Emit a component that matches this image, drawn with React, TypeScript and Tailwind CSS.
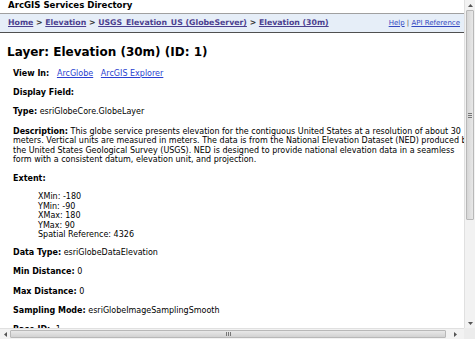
import React from "react";

const Field = ({ label, children, className = "" }: { label: string; children?: React.ReactNode; className?: string }) => (
  <div className={`whitespace-nowrap leading-[9.6px] ${className}`}>
    <b>{label}</b> {children}
  </div>
);

const extent = ["XMin: -180", "YMin: -90", "XMax: 180", "YMax: 90", "Spatial Reference: 4326"];

const App = () => {
  return (
    <div className="relative w-[475px] h-[339px] overflow-hidden bg-white text-[8px] text-[#222] font-['DejaVu_Sans',Verdana,sans-serif]">
      <div className="w-[464px] h-[328px] overflow-hidden">
        <div className="px-[8px] pt-[1px] h-[13px] text-[8.6px] font-bold leading-[9px] text-black">ArcGIS Services Directory</div>

        <div className="flex items-center justify-between h-[20px] pl-[8px] pr-[4px] bg-[#e6eef8] border-t border-[#a0a0a0] border-b border-b-[#505050]">
          <div className="font-bold text-[7.8px] text-[#333] whitespace-nowrap">
            <a className="text-[#4b3f8f] underline">Home</a> &gt;{" "}
            <a className="text-[#4b3f8f] underline">Elevation</a> &gt;{" "}
            <a className="text-[#4b3f8f] underline">USGS_Elevation_US (GlobeServer)</a> &gt;{" "}
            <a className="text-[#4b3f8f] underline">Elevation (30m)</a>
          </div>
          <div className="text-[7px] text-[#555] whitespace-nowrap">
            <a className="text-[#3448c0] underline">Help</a> | <a className="text-[#3448c0] underline">API Reference</a>
          </div>
        </div>

        <h1 className="px-[7px] pt-[12px] h-[35px] text-[12px] font-bold leading-[15px] text-black whitespace-nowrap">
          Layer: Elevation (30m) (ID: 1)
        </h1>

        <div className="pl-[13px] pt-[1px] text-black">
          <Field label="View In:" className="mb-[9.6px]">
            &nbsp;&nbsp;<a className="text-[#2a3fd0] underline">ArcGlobe</a>&nbsp;&nbsp;&nbsp;
            <a className="text-[#2a3fd0] underline">ArcGIS Explorer</a>
          </Field>
          <Field label="Display Field:" className="mb-[9.6px]" />
          <Field label="Type:" className="mb-[9.6px]">esriGlobeCore.GlobeLayer</Field>
          <div className="whitespace-nowrap leading-[9.6px] mb-[9px]">
            <b>Description:</b> This globe service presents elevation for the contiguous United States at a resolution of about 30
            <br />
            meters. Vertical units are measured in meters. The data is from the National Elevation Dataset (NED) produced by
            <br />
            the United States Geological Survey (USGS). NED is designed to provide national elevation data in a seamless
            <br />
            form with a consistent datum, elevation unit, and projection.
          </div>
          <Field label="Extent:" className="mb-[8.4px]" />
          <div className="pl-[25px] mb-[8.4px]">
            {extent.map((e) => (
              <div key={e} className="leading-[9.6px] whitespace-nowrap">{e}</div>
            ))}
          </div>
          <Field label="Data Type:" className="mb-[9.6px]">esriGlobeDataElevation</Field>
          <Field label="Min Distance:" className="mb-[9.6px]">0</Field>
          <Field label="Max Distance:" className="mb-[9.6px]">0</Field>
          <Field label="Sampling Mode:" className="mb-[9.6px]">esriGlobeImageSamplingSmooth</Field>
          <Field label="Base ID:">-1</Field>
        </div>
      </div>

      {/* vertical scrollbar */}
      <div className="absolute top-0 right-0 w-[11px] h-[328px] bg-[#f2f2f2] border-l border-[#e0e0e0] flex flex-col">
        <div className="h-[10px] flex items-center justify-center">
          <svg width="5" height="3" viewBox="0 0 5 3"><path d="M0 3 L2.5 0 L5 3Z" fill="#555" /></svg>
        </div>
        <div className="h-[210px] mx-[1px] rounded-[1px] bg-gradient-to-r from-[#d6d6d6] to-[#e8e8e8] border border-[#b8b8b8] flex items-center justify-center">
          <div className="flex flex-col gap-[1px]">
            <div className="w-[4px] h-px bg-[#777]" />
            <div className="w-[4px] h-px bg-[#777]" />
            <div className="w-[4px] h-px bg-[#777]" />
          </div>
        </div>
        <div className="flex-1" />
        <div className="h-[10px] flex items-center justify-center">
          <svg width="5" height="3" viewBox="0 0 5 3"><path d="M0 0 L2.5 3 L5 0Z" fill="#555" /></svg>
        </div>
      </div>

      {/* horizontal scrollbar */}
      <div className="absolute left-0 bottom-0 w-[464px] h-[11px] bg-[#f2f2f2] border-t border-[#e0e0e0] flex items-stretch">
        <div className="w-[10px] flex items-center justify-center">
          <svg width="3" height="5" viewBox="0 0 3 5"><path d="M3 0 L0 2.5 L3 5Z" fill="#555" /></svg>
        </div>
        <div className="w-[436px] my-[1px] rounded-[1px] bg-gradient-to-b from-[#e8e8e8] to-[#d2d2d2] border border-[#b8b8b8] flex items-center justify-center">
          <div className="flex gap-[1px]">
            <div className="w-px h-[4px] bg-[#777]" />
            <div className="w-px h-[4px] bg-[#777]" />
            <div className="w-px h-[4px] bg-[#777]" />
          </div>
        </div>
        <div className="flex-1 flex items-center justify-center">
          <svg width="3" height="5" viewBox="0 0 3 5"><path d="M0 0 L3 2.5 L0 5Z" fill="#555" /></svg>
        </div>
      </div>
      <div className="absolute right-0 bottom-0 w-[11px] h-[11px] bg-[#ececec]" />
    </div>
  );
};

export default App;
